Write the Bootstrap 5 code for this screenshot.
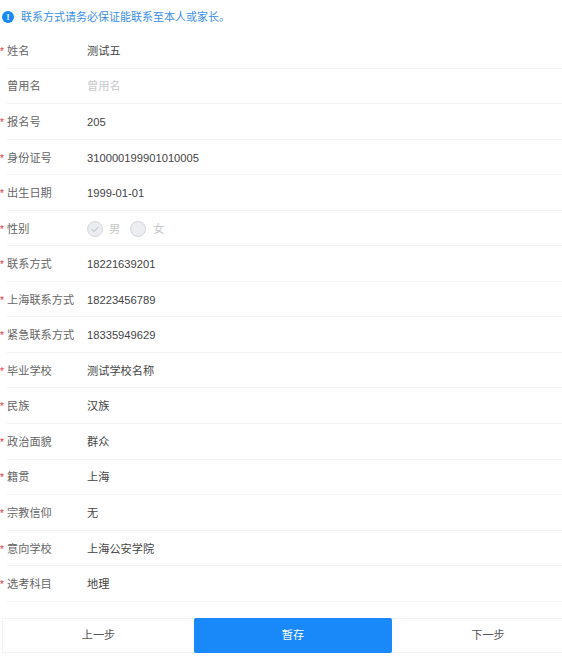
<!DOCTYPE html>
<html lang="zh">
<head>
<meta charset="utf-8">
<title>报名信息</title>
<link href="https://cdn.jsdelivr.net/npm/bootstrap@5.3.0/dist/css/bootstrap.min.css" rel="stylesheet">
<style>
html,body{height:664px;overflow:hidden;background:#fff}
body{font-family:"Liberation Sans","Noto Sans CJK SC",sans-serif;font-size:11.2px;color:#555}
.tip-line{height:33px;padding:1px 0 0 2px;color:#3a8ee6;gap:7px;font-size:11px}
.tip-dot{width:12px;height:12px;border-radius:50%;background:#1989fa;color:#fff;font-size:9px;font-weight:700;line-height:12px;text-align:center;flex:none}
.form-line{height:35.55px;margin-left:7px;padding-top:2px;border-bottom:1px solid #f3f3f3}
.field-name{width:80px;flex:none;position:relative;color:#666}
.field-name.req::before{content:"*";position:absolute;left:-7px;top:1px;color:#e8303c;font-size:10px}
.field-val{color:#444}
.field-val.empty{color:#c8c9cc}
.choice{width:16px;height:16px;border-radius:50%;background:#ebedf0;border:1px solid #d5d7db;flex:none}
.choice-txt{color:#c8c9cc;margin:0 10px 0 6px}
.choice-txt:last-child{margin-left:7px}
.step-bar{margin:16px 0 0 2px;height:35px;width:582px}
.step-btn{flex:0 0 192px;border:1px solid #f3f3f3;border-left:0;border-right:0;border-radius:0;background:#fff;color:#555;font-size:11.2px;padding:0}
.step-btn:first-child{border-left:1px solid #f3f3f3}
.step-btn.save{flex:0 0 198px;background:#1989fa;border-color:#1989fa;color:#fff;border-radius:2px}
</style>
</head>
<body>
<div class="d-flex align-items-center tip-line"><span class="tip-dot">!</span><span>联系方式请务必保证能联系至本人或家长。</span></div>
<div class="d-flex align-items-center form-line"><div class="field-name req">姓名</div><div class="field-val">测试五</div></div>
<div class="d-flex align-items-center form-line"><div class="field-name">曾用名</div><div class="field-val empty">曾用名</div></div>
<div class="d-flex align-items-center form-line"><div class="field-name req">报名号</div><div class="field-val">205</div></div>
<div class="d-flex align-items-center form-line"><div class="field-name req">身份证号</div><div class="field-val">310000199901010005</div></div>
<div class="d-flex align-items-center form-line"><div class="field-name req">出生日期</div><div class="field-val">1999-01-01</div></div>
<div class="d-flex align-items-center form-line"><div class="field-name req">性别</div>
<div class="d-flex align-items-center">
<svg class="choice" viewBox="0 0 16 16" aria-hidden="true"><path d="M4 8.2l2.8 2.8L12 5.6" fill="none" stroke="#c8c9cc" stroke-width="1.4"/></svg><span class="choice-txt">男</span><span class="choice"></span><span class="choice-txt">女</span>
</div></div>
<div class="d-flex align-items-center form-line"><div class="field-name req">联系方式</div><div class="field-val">18221639201</div></div>
<div class="d-flex align-items-center form-line"><div class="field-name req">上海联系方式</div><div class="field-val">18223456789</div></div>
<div class="d-flex align-items-center form-line"><div class="field-name req">紧急联系方式</div><div class="field-val">18335949629</div></div>
<div class="d-flex align-items-center form-line"><div class="field-name req">毕业学校</div><div class="field-val">测试学校名称</div></div>
<div class="d-flex align-items-center form-line"><div class="field-name req">民族</div><div class="field-val">汉族</div></div>
<div class="d-flex align-items-center form-line"><div class="field-name req">政治面貌</div><div class="field-val">群众</div></div>
<div class="d-flex align-items-center form-line"><div class="field-name req">籍贯</div><div class="field-val">上海</div></div>
<div class="d-flex align-items-center form-line"><div class="field-name req">宗教信仰</div><div class="field-val">无</div></div>
<div class="d-flex align-items-center form-line"><div class="field-name req">意向学校</div><div class="field-val">上海公安学院</div></div>
<div class="d-flex align-items-center form-line"><div class="field-name req">选考科目</div><div class="field-val">地理</div></div>
<div class="d-flex step-bar">
<button type="button" class="btn step-btn">上一步</button>
<button type="button" class="btn step-btn save">暂存</button>
<button type="button" class="btn step-btn">下一步</button>
</div>
<script src="https://cdn.jsdelivr.net/npm/bootstrap@5.3.0/dist/js/bootstrap.bundle.min.js"></script>
</body>
</html>
